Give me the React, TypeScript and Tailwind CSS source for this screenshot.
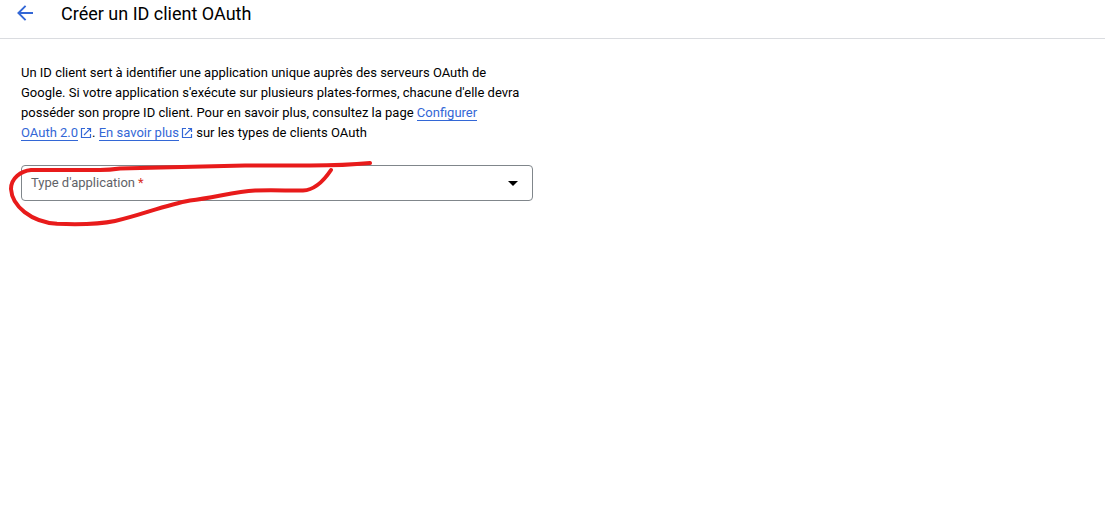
import type { ReactNode } from 'react';

function OpenInNew() {
  return (
    <svg viewBox="0 0 12 12" className="ml-0.5 inline-block size-3 align-[-2px]" fill="none" stroke="#3367d6" strokeWidth="1.2" aria-hidden="true">
      <path d="M5 1.500H1.500v9h9V7M7 1.500h3.500V5M10.300 1.700L4 8" />
    </svg>
  );
}

function TextLink({ href, children }: { href: string; children: ReactNode }) {
  return (
    <a href={href} className="border-b border-[#3367d6] text-[#3367d6]">
      {children}
    </a>
  );
}

function Annotation() {
  return (
    <svg
      viewBox="0 150 400 80"
      className="pointer-events-none absolute -top-4 -left-[22px] h-20 w-[400px]"
      fill="none"
      stroke="#e81b1b"
      strokeWidth="4"
      strokeLinecap="round"
      strokeLinejoin="round"
      aria-hidden="true"
    >
      <path d="M370 163C350 165 330 165.500 310 165.500L245 165.500C210 166 160 167.500 120 168.500C113 169.500 108 170 100 170L31 170C21 171 11 178 11 189C12 206 31 222 57 223.800C75 224.500 98 224.500 115 221C140 215.500 165 205 190 200.500C215 197.500 235 191.500 255 190.500C270 190 285 190.500 303 190.500C315 190 325 179 331 170" />
    </svg>
  );
}

export default function App() {
  return (
    <div className="min-h-screen bg-white font-[Roboto,sans-serif] text-[13px] leading-5 text-black">
      <header className="flex items-start gap-6 border-b border-[#dadce0] px-[15px] pb-[10px]">
        <button type="button" aria-label="Retour" className="flex h-[26px] w-[22px] items-center">
          <svg viewBox="0 0 20 16" className="h-4 w-5" fill="none" stroke="#3367d6" strokeWidth="1.900" aria-hidden="true">
            <path d="M18 8H3.500M10.600 .8L3.400 8l7.200 7.200" />
          </svg>
        </button>
        <h1 className="text-lg leading-7">Créer un ID client OAuth</h1>
      </header>
      <main className="max-w-[554px] px-[21px] pt-6">
        <p className="pr-2">
          Un ID client sert à identifier une application unique auprès des serveurs OAuth de Google. Si votre
          application s'exécute sur plusieurs plates-formes, chacune d'elle devra posséder son propre ID client. Pour en
          savoir plus, consultez la page <TextLink href="#configurer">Configurer OAuth&nbsp;2.0</TextLink>
          <OpenInNew />. <TextLink href="#en-savoir-plus">En savoir plus</TextLink>
          <OpenInNew /> sur les types de clients OAuth
        </p>
        <div className="relative mt-[22px] rounded border border-[#80868b]">
          <select id="type" required defaultValue="" className="block h-[34px] w-full appearance-none rounded bg-transparent px-[9px] outline-none">
            <option value="" />
            <option value="web">Application Web</option>
          </select>
          <label htmlFor="type" className="pointer-events-none absolute inset-y-0 left-[9px] flex items-center gap-[3px] text-[#5f6368]">
            Type d'application <span className="text-[#d93025]">*</span>
          </label>
          <svg viewBox="0 0 10 5" className="pointer-events-none absolute inset-y-0 right-[14px] my-auto h-[5px] w-[10px]" aria-hidden="true">
            <path d="M0 0h10L5 5z" />
          </svg>
          <Annotation />
        </div>
      </main>
    </div>
  );
}
